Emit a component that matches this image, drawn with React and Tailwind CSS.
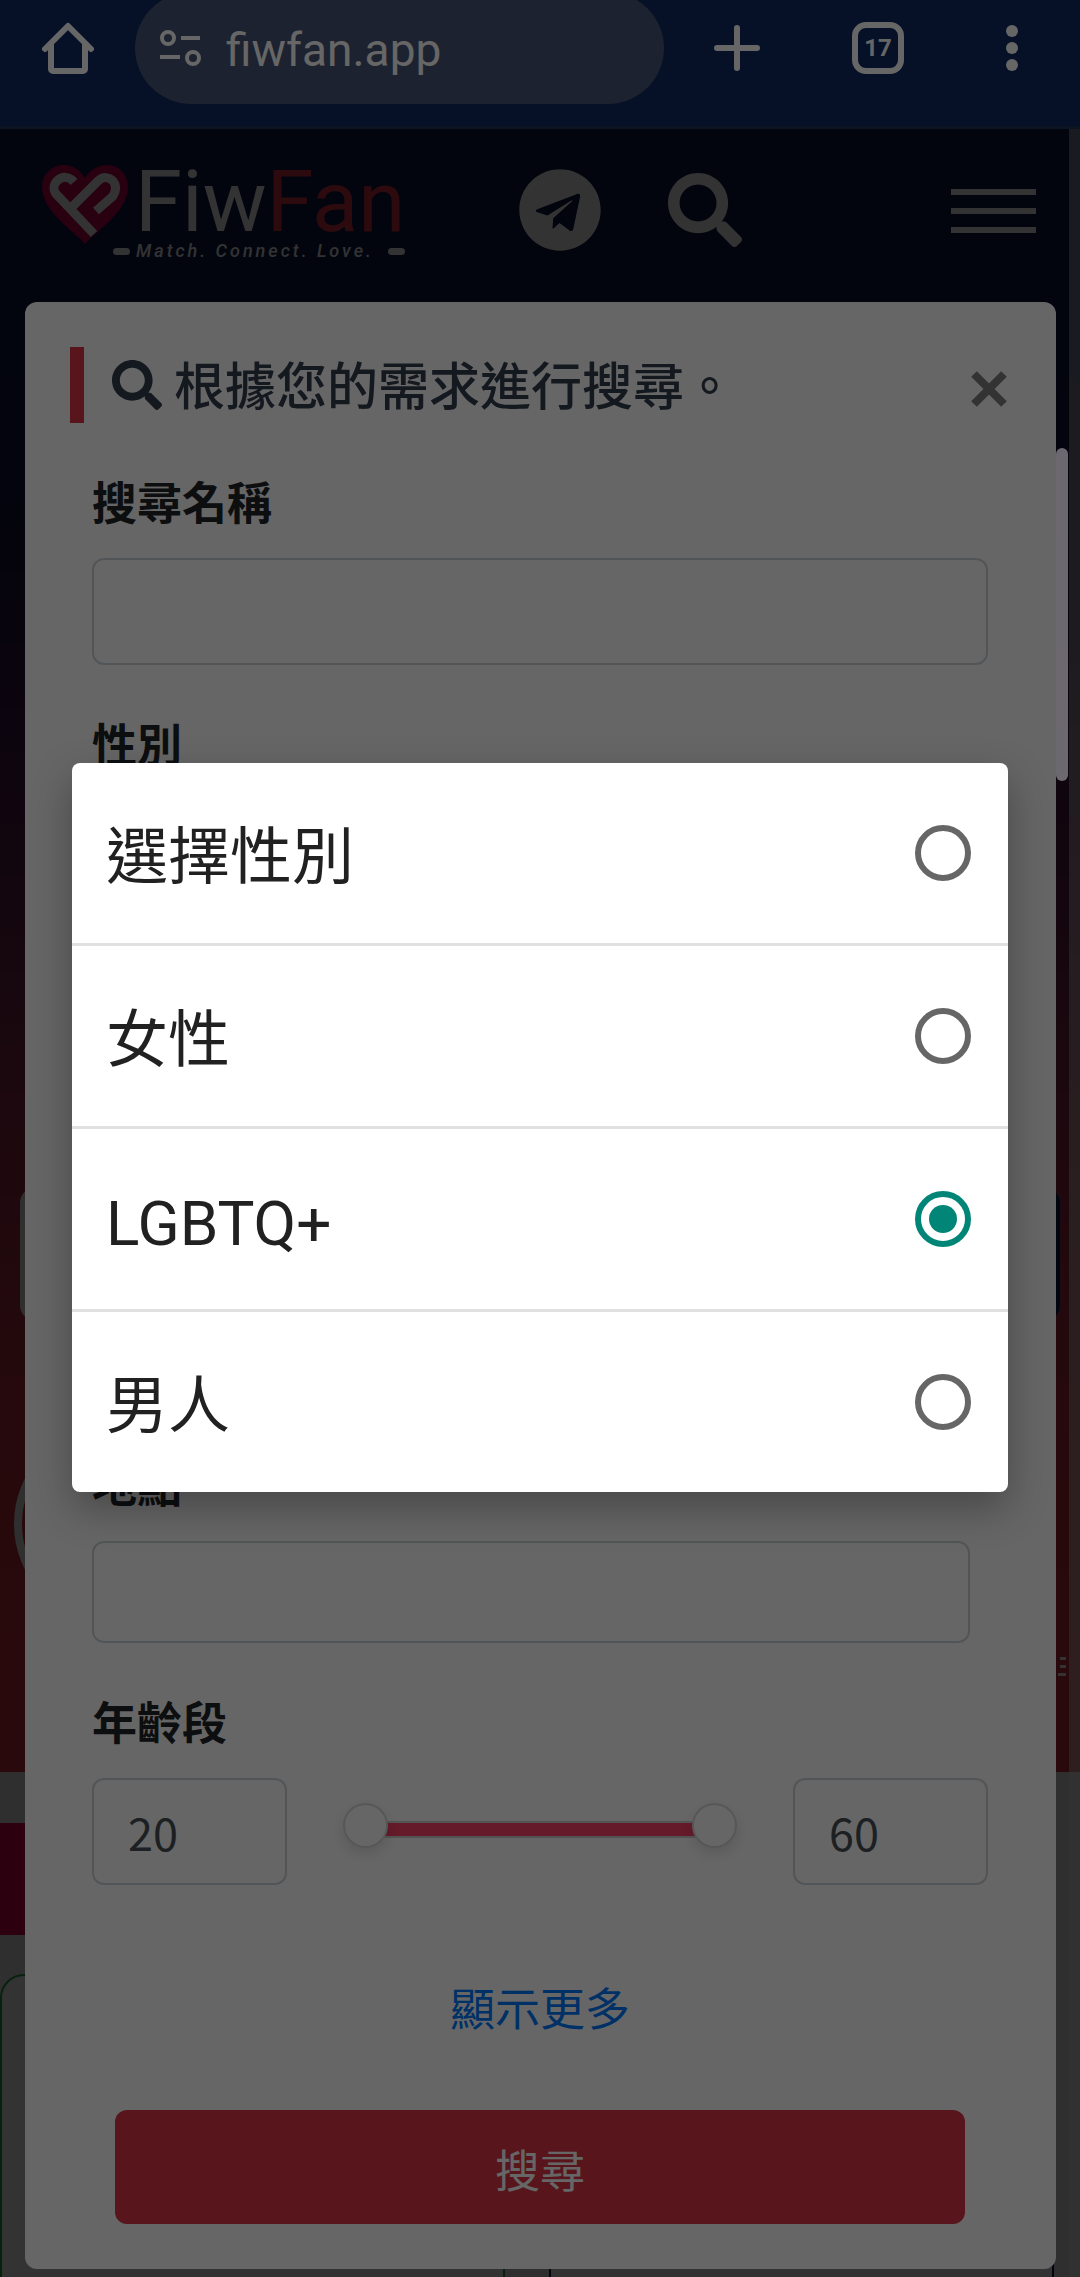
import { useState } from 'react';
import { FaSearch, FaTelegram } from 'react-icons/fa';

const GENDERS = ['選擇性別', '女性', 'LGBTQ+', '男人'];

const FIELD =
  'block w-full rounded-xl border-2 border-[#ced4da] bg-white px-[34px] text-[45px] text-[#495057]';
const LABEL = 'block text-[45px] leading-[66px] font-bold text-[#212529] mb-6';
const RANGE =
  'absolute inset-0 w-full h-full appearance-none bg-transparent pointer-events-none [&::-webkit-slider-thumb]:pointer-events-auto [&::-webkit-slider-thumb]:appearance-none [&::-webkit-slider-thumb]:size-[45px] [&::-webkit-slider-thumb]:rounded-full [&::-webkit-slider-thumb]:bg-white [&::-webkit-slider-thumb]:border-2 [&::-webkit-slider-thumb]:border-[#d9d9d9] [&::-webkit-slider-thumb]:shadow-[0_6px_14px_rgba(0,0,0,0.12)]';

function BrowserBar() {
  return (
    <div className="flex items-start h-[129px] bg-[#0f295f] border-b-[3px] border-[#213454] font-[Roboto,sans-serif] text-white overflow-hidden">
      <button aria-label="Home" className="shrink-0 ml-[41px] mt-[21px]">
        <svg width="54" height="54" viewBox="0 0 54 54" fill="none" stroke="currentColor" strokeWidth="6" strokeLinecap="round" strokeLinejoin="round">
          <path d="M4 28 27 5l23 23M10 24v24a2 2 0 0 0 2 2h30a2 2 0 0 0 2-2V24" />
        </svg>
      </button>
      <div className="flex flex-1 min-w-0 items-center gap-6 h-28 -mt-2 ml-10 pl-6 rounded-full bg-[#465575]">
        <svg width="43" height="38" viewBox="0 0 43 38" fill="none" stroke="currentColor" strokeWidth="4" className="shrink-0">
          <circle cx="9" cy="9" r="6" />
          <path d="M22 9h19M1 28h20" />
          <circle cx="34" cy="29" r="6" />
        </svg>
        <input
          aria-label="URL"
          defaultValue="fiwfan.app"
          className="flex-1 min-w-0 pt-1 bg-transparent text-[46px] leading-[60px]"
        />
      </div>
      <button aria-label="New tab" className="shrink-0 ml-[50px] mt-[25px]">
        <svg width="46" height="46" viewBox="0 0 46 46" stroke="currentColor" strokeWidth="6" strokeLinecap="round">
          <path d="M23 3v40M3 23h40" />
        </svg>
      </button>
      <button className="shrink-0 ml-[92px] mt-[22px] size-[52px] rounded-[14px] border-[6px] border-white text-2xl leading-none font-bold">
        17
      </button>
      <button aria-label="Menu" className="shrink-0 flex flex-col items-center gap-[5px] ml-[102px] mr-[62px] mt-[25px]">
        <span className="size-3 rounded-full bg-white" />
        <span className="size-3 rounded-full bg-white" />
        <span className="size-3 rounded-full bg-white" />
      </button>
    </div>
  );
}

function Logo() {
  return (
    <div className="flex items-start w-[361px] shrink-0 font-[Roboto,sans-serif]">
      <svg width="86" height="80" viewBox="0 0 86 80" className="shrink-0">
        <path
          d="M43 79C32 66 0 47 0 22 0 9 10 0 22 0c9 0 16 5 21 13C48 5 56 0 65 0c12 0 21 9 21 22 0 25-32 44-43 57Z"
          fill="#cc0055"
        />
        <path
          d="M32 17c-5-6-12-6-17-1-4 4-4 10 0 14l37 39M31 41l25-25c5-5 11-4 15 0 4 5 3 10 0 15L54 46"
          fill="none"
          stroke="#fff"
          strokeWidth="9"
        />
      </svg>
      <div className="flex-1 -ml-[15px]">
        <div className="pl-[22px] text-[85px] leading-[74px] text-white">
          Fiw<span className="text-[#dc3545]">Fan</span>
        </div>
        <div className="flex items-center gap-[6px] text-white">
          <span className="w-[17px] h-[7px] rounded-full bg-white" />
          <span className="text-lg leading-6 italic font-medium tracking-[3px] whitespace-nowrap">Match. Connect. Love.</span>
          <span className="w-[17px] h-[7px] ml-2 rounded-full bg-white" />
        </div>
      </div>
    </div>
  );
}

function Page() {
  return (
    <div className="relative col-start-1 row-start-1 flex flex-col min-w-0 overflow-hidden bg-[#f2eeee]">
      <header className="flex items-start h-[170px] pt-9 pl-[42px] pr-11 bg-[#0a174a]">
        <Logo />
        <div className="flex items-center gap-[66px] ml-[115px] mt-[3px] text-white">
          <a href="#telegram" aria-label="Telegram"><FaTelegram size={84} /></a>
          <a href="#search" aria-label="Search"><FaSearch size={74} /></a>
        </div>
        <button aria-label="Menu" className="flex flex-col gap-[13px] ml-auto mt-6">
          <span className="w-[85px] h-[6px] bg-white" />
          <span className="w-[85px] h-[6px] bg-white" />
          <span className="w-[85px] h-[6px] bg-white" />
        </button>
      </header>

      <section className="h-[1473px] shrink-0 pt-[888px] px-[14px] bg-[linear-gradient(#0a174a,#1c1444_18%,#501c48_34%,#8c2c4a_54%,#be2f3e_76%,#d43040)]">
        <div className="flex h-[134px] mx-[6px] rounded-2xl overflow-hidden">
          <div className="flex-1 bg-[#eee]" />
          <div className="w-40 bg-[#05204b]" />
        </div>
        <div className="size-[202px] mt-[102px] rounded-full border-8 border-[#eee]" />
        <div className="flex flex-col items-end gap-[5px] mt-8">
          <span className="w-[6px] h-[3px] bg-white" />
          <span className="w-[6px] h-[3px] bg-white" />
          <span className="w-2 h-[3px] bg-white" />
        </div>
      </section>
      <div className="h-28 shrink-0 mt-[51px] mr-[30px] bg-[#e40050]" />
      <div className="flex flex-1 gap-11 mt-[39px] pr-[26px]">
        <div className="flex-1 -mb-10 rounded-3xl border-2 border-[#28a745] bg-white" />
        <div className="flex-1 -mb-10 rounded-3xl border-2 border-[#0a1450] bg-white" />
      </div>

      {/* scrollbar gutter */}
      <div className="absolute inset-y-0 right-0 w-[11px] bg-white/50" />
    </div>
  );
}

function SearchModal() {
  const [name, setName] = useState('');
  const [place, setPlace] = useState('');
  const [ages, setAges] = useState([20, 60]);

  return (
    <div className="relative col-start-1 row-start-1 pt-[173px] pb-2 pl-[25px] pr-6 bg-black/50">
      <form className="rounded-xl bg-white p-[45px]" onSubmit={(e) => e.preventDefault()}>
        <div className="flex items-start justify-between">
          <h2 className="flex items-center gap-3 h-[76px] border-l-[14px] border-[#dc3545] pl-7 text-[51px] font-medium text-[#343f52]">
            <FaSearch size={50} />
            <span className="pb-1">根據您的需求進行搜尋。</span>
          </h2>
          <button type="button" aria-label="Close" className="mt-6 mr-1 text-[#7f7f7f]">
            <svg width="36" height="36" viewBox="0 0 36 36" stroke="currentColor" strokeWidth="8">
              <path d="m3 3 30 30M33 3 3 33" />
            </svg>
          </button>
        </div>

        <div className="pl-[22px] pr-[23px] pt-[45px]">
          <label htmlFor="name" className={LABEL}>搜尋名稱</label>
          <input id="name" value={name} onChange={(e) => setName(e.target.value)} className={`${FIELD} h-[107px] mb-[45px]`} />

          <label htmlFor="gender" className={LABEL}>性別</label>
          <select id="gender" defaultValue="LGBTQ+" className={`${FIELD} h-[107px] mb-[544px]`}>
            {GENDERS.map((g) => (
              <option key={g}>{g}</option>
            ))}
          </select>

          <div className="mr-[18px] mb-[45px]">
            <label htmlFor="place" className={LABEL}>地點</label>
            <input id="place" value={place} onChange={(e) => setPlace(e.target.value)} className={`${FIELD} h-[102px]`} />
          </div>

          <label htmlFor="age-min" className={LABEL}>年齡段</label>
          <div className="flex items-center">
            <div className="w-[195px]">
              <input id="age-min" value={ages[0]} onChange={(e) => setAges([e.target.value, ages[1]])} className={`${FIELD} h-[107px]`} />
            </div>
            <div className="relative flex-1 h-[45px] mx-14 -mt-3">
              <div className="mx-6 mt-[18px] h-[17px] border-2 border-[#d3d3d3] bg-[#fc4468]" />
              <input type="range" aria-label="最小" min="20" max="60" value={ages[0]} onChange={(e) => setAges([e.target.value, ages[1]])} className={RANGE} />
              <input type="range" aria-label="最大" min="20" max="60" value={ages[1]} onChange={(e) => setAges([ages[0], e.target.value])} className={RANGE} />
            </div>
            <div className="w-[195px]">
              <input aria-label="年齡段" value={ages[1]} onChange={(e) => setAges([ages[0], e.target.value])} className={`${FIELD} h-[107px]`} />
            </div>
          </div>

          <div className="mt-[88px] mb-[69px] text-center">
            <a href="#more" className="block text-[45px] leading-[68px] text-[#007bff]">顯示更多</a>
          </div>
          <div className="px-[23px]">
            <button className="block w-full h-[114px] pt-1 rounded-xl bg-[#dc3545] text-[45px] text-white">搜尋</button>
          </div>
        </div>
      </form>
    </div>
  );
}

function GenderPicker() {
  const [gender, setGender] = useState('LGBTQ+');

  return (
    <div className="absolute inset-0 grid items-center pb-[22px] px-[72px] bg-black/60">
      <div role="dialog" className="rounded-lg bg-white divide-y-[3px] divide-[#e0e0e0] shadow-[0_16px_40px_rgba(0,0,0,0.3)]">
        {GENDERS.map((g) => (
          <label key={g} className="box-content flex items-center justify-between h-[180px] pl-[34px] pr-[37px] font-[Roboto,'Noto_Sans_CJK_TC',sans-serif] text-[62px] text-[#212121]">
            <span className="pt-2">{g}</span>
            <input
              type="radio"
              name="gender"
              checked={gender === g}
              onChange={() => setGender(g)}
              className="grid place-items-center size-14 appearance-none rounded-full border-[6px] border-[#666] checked:border-[#008577] checked:before:size-7 checked:before:rounded-full checked:before:bg-[#008577]"
            />
          </label>
        ))}
      </div>
    </div>
  );
}

export default function App() {
  return (
    <div className="relative min-h-screen overflow-hidden font-['Noto_Sans_CJK_TC',sans-serif]">
      <BrowserBar />
      <div className="grid">
        <Page />
        <SearchModal />
      </div>
      <GenderPicker />
      {/* page scroll thumb */}
      <div className="absolute right-3 top-[448px] w-3 h-[333px] rounded-full bg-[#6c6870]" />
    </div>
  );
}
